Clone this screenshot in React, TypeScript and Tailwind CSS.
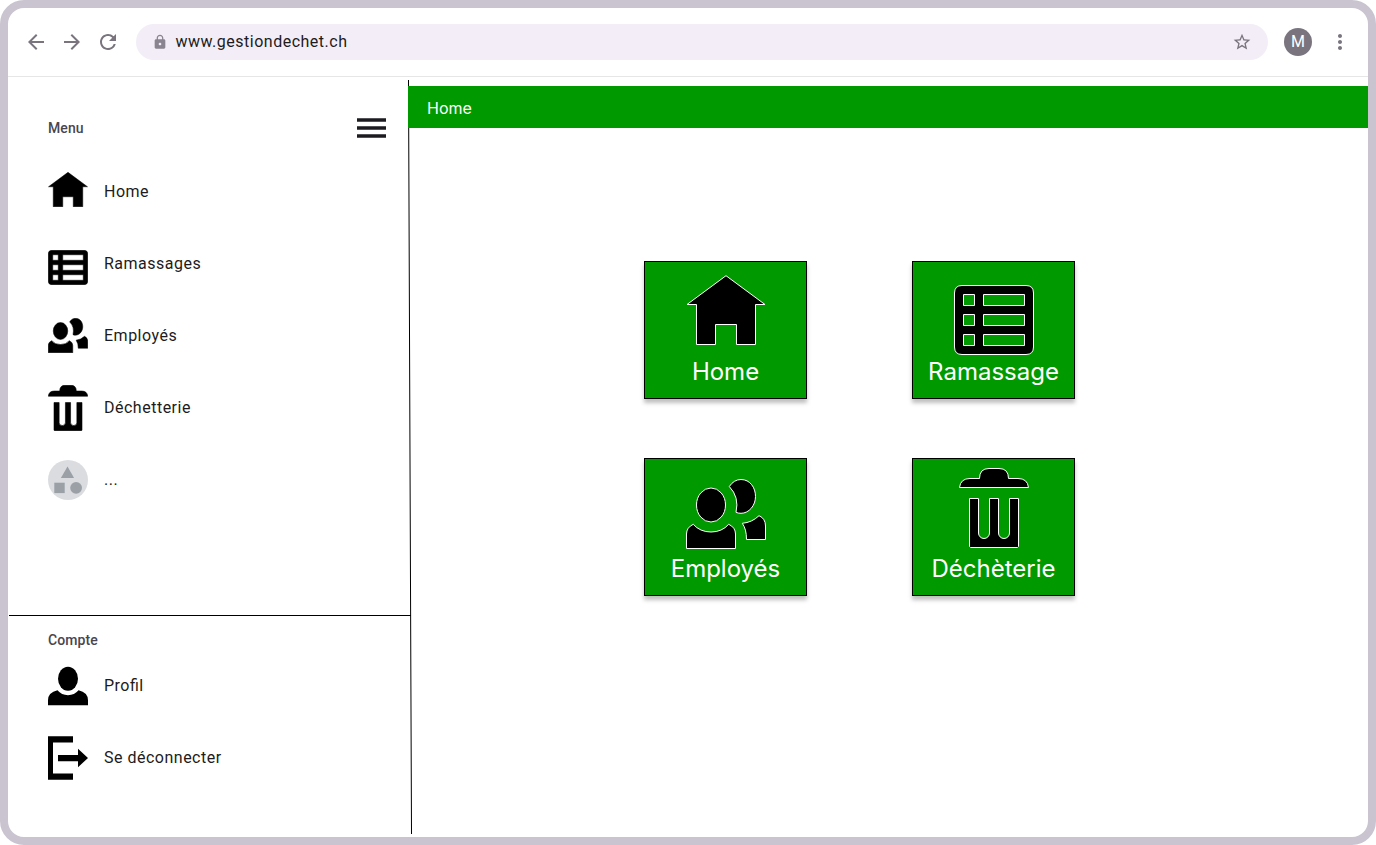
import type { ReactNode } from 'react';
import { MdArrowBack, MdArrowForward, MdLock, MdMoreVert, MdRefresh, MdStarBorder } from 'react-icons/md';

type IconProps = { className: string };

function HouseIcon({ className }: IconProps) {
  return (
    <svg className={className} viewBox="0 0 80 70" preserveAspectRatio="none" fill="black" strokeWidth="1">
      <path d="M40 .7L1 29.5H10.5V69.5H29.5V49.5H50.5V69.5H69.5V29.5H79Z" />
    </svg>
  );
}

function ListIcon({ className }: IconProps) {
  return (
    <svg className={className} viewBox="0 0 80 70" preserveAspectRatio="none" fill="black" fillRule="evenodd" strokeWidth="1">
      <path d="M8 .5H72Q79.5 .5 79.5 8V62Q79.5 69.5 72 69.5H8Q.5 69.5 .5 62V8Q.5 .5 8 .5ZM9.5 9.5V20.5H20.5V9.5ZM29.5 9.5V20.5H70.5V9.5ZM9.5 29.5V40.5H20.5V29.5ZM29.5 29.5V40.5H70.5V29.5ZM9.5 49.5V60.5H20.5V49.5ZM29.5 49.5V60.5H70.5V49.5Z" />
    </svg>
  );
}

function PeopleIcon({ className }: IconProps) {
  return (
    <svg className={className} viewBox="0 0 80 70" preserveAspectRatio="none" fill="black" strokeWidth="1">
      <ellipse cx="25" cy="26" rx="14.5" ry="17" />
      <path d="M.5 69.5V55Q.5 48.5 7.3 45.3Q14 53 25 53Q36 53 42.7 45.3Q49.5 48.5 49.5 55V69.5Z" />
      <path d="M43.3 7.5Q48 .5 55 .5C64 .5 69.5 8.5 69.5 17.5C69.5 26.5 63 34.3 55 34.3Q52 34.3 50 33.3Q53.5 18 43.3 7.5Z" />
      <path d="M56.3 44.3Q66 43.5 73 36.7Q79.5 39.5 79.5 47V60.5H60.5Q60.5 50 56.3 44.3Z" />
    </svg>
  );
}

function TrashIcon({ className }: IconProps) {
  return (
    <svg className={className} viewBox="0 0 70 80" preserveAspectRatio="none" fill="black" strokeWidth="1">
      <path d="M.5 19.5Q1.5 10.5 11 10.5H20.5Q20.5 .5 30 .5H40Q49.5 .5 49.5 10.5H59Q68.5 10.5 69.5 19.5Z" />
      <path d="M10.5 30.5H19.5V65A5.5 5.5 0 0 0 30.5 65V30.5H39.5V65A5.5 5.5 0 0 0 50.5 65V30.5H59.5V78.5L58.5 79.5H11.5L10.5 78.5Z" />
    </svg>
  );
}

function CategoryIcon({ className }: IconProps) {
  return (
    <svg className={className} viewBox="0 0 40 40" stroke="none">
      <circle cx="20" cy="20" r="20" fill="#dadce0" />
      <g fill="#9aa0a6">
        <path d="M19.5 6.6L26.1 18H12.9Z" />
        <path d="M6.3 22.7H16.7V33.1H6.3Z" />
        <circle cx="28.1" cy="27.8" r="5.9" />
      </g>
    </svg>
  );
}

function PersonIcon({ className }: IconProps) {
  return (
    <svg className={className} viewBox="0 0 40 39" fill="black" stroke="none">
      <ellipse cx="20" cy="12.7" rx="10" ry="12" />
      <path d="M0 39.3V34.3Q0 26.5 9.5 24.3Q13.5 29.2 20 29.2Q26.5 29.2 30.5 24.3Q40 26.5 40 34.3V39.3Z" />
    </svg>
  );
}

function LogoutIcon({ className }: IconProps) {
  return (
    <svg className={className} viewBox="0 0 40 44" fill="black" stroke="none">
      <path d="M0 .2H25V6.5H5V37.4H25V43.8H0ZM10 19H30V12.7L40 22L30 31.2V25.2H10Z" />
    </svg>
  );
}

function NavItem({ icon, label }: { icon: ReactNode; label: string }) {
  return (
    <a className="flex h-18 items-start gap-4 stroke-black">
      {icon}
      <span className="mt-6 text-base leading-6 tracking-[0.5px] text-[#1d1b20] [font-feature-settings:'liga'_1]">{label}</span>
    </a>
  );
}

function Card({ icon, label }: { icon: ReactNode; label: string }) {
  return (
    <button className="flex h-[138px] w-[163px] flex-col items-center border border-black bg-[#009a00] stroke-white shadow-[0_4px_4px_rgba(0,0,0,0.25)]">
      <span className="flex h-[95px] shrink-0 items-start">{icon}</span>
      <span className="font-['Inter',sans-serif] text-2xl leading-[29px] whitespace-nowrap text-white">{label}</span>
    </button>
  );
}

export default function App() {
  return (
    <div className="relative flex h-[845px] w-[1376px] flex-col overflow-hidden rounded-[24px] border-8 border-[#cac4d0] bg-white font-['Roboto',sans-serif]">
      <header className="flex h-[69px] shrink-0 items-center border-b border-[#e6e6e6] pr-4 pl-4 text-[#79747e]">
        <nav className="flex gap-3">
          <MdArrowBack size={24} />
          <MdArrowForward size={24} />
          <MdRefresh size={24} />
        </nav>
        <div className="ml-4 flex h-9 w-[1132px] items-center rounded-full bg-[#f3edf7] pr-4 pl-[15.5px]">
          <MdLock size={16} className="text-[#8a8490]" />
          <span className="ml-2 flex-1 text-base leading-6 tracking-[0.5px] text-[#1d1b20]">www.gestiondechet.ch</span>
          <MdStarBorder size={20} />
        </div>
        <span className="ml-4 flex size-7 items-center justify-center rounded-full bg-[#79747e] text-base leading-6 text-white">M</span>
        <MdMoreVert size={24} className="ml-4" />
      </header>

      <div className="flex min-h-0 flex-1">
        <aside className="flex w-[400px] shrink-0 flex-col pt-[41px]">
          <div className="flex h-5 items-center justify-between pr-[22px] pl-10">
            <h2 className="text-sm leading-5 font-medium tracking-[0.1px] text-[#49454f]">Menu</h2>
            <svg className="h-5 w-[29px]" viewBox="0 0 29 20" fill="#1d1b20">
              <path d="M0 .3H29V3.7H0ZM0 8.3H29V11.7H0ZM0 16.3H29V19.7H0Z" />
            </svg>
          </div>
          <nav className="mt-[18px] flex flex-col pl-10">
            <NavItem icon={<HouseIcon className="mt-4 h-[35px] w-10" />} label="Home" />
            <NavItem icon={<ListIcon className="mt-[22px] h-[35px] w-10" />} label="Ramassages" />
            <NavItem icon={<PeopleIcon className="mt-[18px] h-[35px] w-10" />} label="Employés" />
            <NavItem icon={<TrashIcon className="mt-[13px] h-[46px] w-10" />} label="Déchetterie" />
            <NavItem icon={<CategoryIcon className="mt-4 size-10" />} label="..." />
          </nav>
          <div className="mt-[99px] ml-px h-px w-[402px] shrink-0 bg-black" />
          <h2 className="mt-[14px] pl-10 text-sm leading-5 font-medium tracking-[0.1px] text-[#49454f]">Compte</h2>
          <nav className="flex flex-col pl-10">
            <NavItem icon={<PersonIcon className="mt-4 h-[39px] w-10 overflow-visible" />} label="Profil" />
            <NavItem icon={<LogoutIcon className="mt-[14px] h-11 w-10" />} label="Se déconnecter" />
          </nav>
        </aside>

        <main className="flex flex-1 flex-col pt-[9px]">
          <div className="z-10 flex h-[42px] items-center bg-[#009a00] pt-px pl-[19px]">
            <h1 className="font-['Inter',sans-serif] text-base leading-5 text-white">Home</h1>
          </div>
          <div className="mt-[133px] ml-[236px] grid w-fit grid-cols-[163px_163px] gap-x-[105px] gap-y-[59px]">
            <Card icon={<HouseIcon className="mt-[13px] h-[70px] w-20" />} label="Home" />
            <Card icon={<ListIcon className="mt-[23px] h-[70px] w-20" />} label="Ramassage" />
            <Card icon={<PeopleIcon className="mt-5 h-[70px] w-20" />} label="Employés" />
            <Card icon={<TrashIcon className="mt-[9px] h-20 w-[70px]" />} label="Déchèterie" />
          </div>
        </main>
      </div>

      {/* Slightly slanted divider between the sidebar and the content */}
      <svg className="pointer-events-none absolute top-[72px] left-[398px] h-[754px] w-2" viewBox="0 0 8 754" fill="none" stroke="black">
        <path d="M2.5 0L5.5 754" />
      </svg>
    </div>
  );
}
